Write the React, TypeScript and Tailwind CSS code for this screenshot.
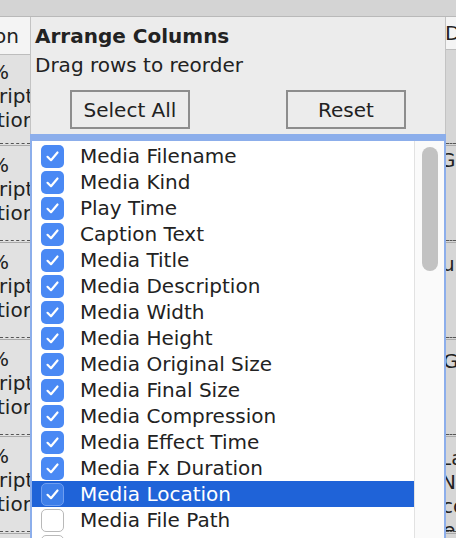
const font = "font-['DejaVu_Sans','Verdana',sans-serif]";

type Row = { label: string; checked: boolean };

const rows: Row[] = [
  { label: "Media Filename", checked: true },
  { label: "Media Kind", checked: true },
  { label: "Play Time", checked: true },
  { label: "Caption Text", checked: true },
  { label: "Media Title", checked: true },
  { label: "Media Description", checked: true },
  { label: "Media Width", checked: true },
  { label: "Media Height", checked: true },
  { label: "Media Original Size", checked: true },
  { label: "Media Final Size", checked: true },
  { label: "Media Compression", checked: true },
  { label: "Media Effect Time", checked: true },
  { label: "Media Fx Duration", checked: true },
  { label: "Media Location", checked: true },
  { label: "Media File Path", checked: false },
  { label: "Media Modified", checked: false },
];

const SELECTED = 13;

const Checkbox = ({ checked, selected }: { checked: boolean; selected: boolean }) => {
  if (!checked) {
    return <div className="w-[23px] h-[23px] shrink-0 rounded-[5px] bg-white border border-[#b9b9b9]" />;
  }
  return (
    <div
      className={`w-[23px] h-[23px] shrink-0 rounded-[5px] flex items-center justify-center ${
        selected ? "bg-[#3d7ee9] border border-[#6f9ef0]" : "bg-[#4a89f4]"
      }`}
    >
      <svg width="15" height="15" viewBox="0 0 15 15" fill="none">
        <path d="M2.5 7.8 L6 11.2 L12.5 3.5" stroke="white" strokeWidth="2.2" strokeLinecap="round" strokeLinejoin="round" />
      </svg>
    </div>
  );
};

// background table cell, partly hidden behind the popup
const Cell = ({ h, lines, dashed, pt, dark }: { h: number; lines: [string, number][]; dashed?: boolean; pt: number; dark?: boolean }) => (
  <div
    className={`shrink-0 overflow-hidden ${dark ? "bg-[#d6d6d6]" : "bg-[#e1e1e1]"} ${
      dashed ? "border-t border-dashed border-[#555]" : ""
    }`}
    style={{ height: h }}
  >
    {dashed && <div className="h-[2px] border-b border-[#a9a9a9]" />}
    <div style={{ paddingTop: pt }}>
      {lines.map(([t, ml], i) => (
        <div key={i} className="leading-[24px] whitespace-nowrap text-[#222]" style={{ marginLeft: ml }}>
          {t}
        </div>
      ))}
    </div>
  </div>
);

const leftLines: [string, number][] = [
  ["%", -10],
  ["ript", -1],
  ["tion", -3],
];

export default function App() {
  return (
    <div className={`w-[456px] h-[538px] overflow-hidden bg-[#d4d4d4] text-[20px] ${font}`}>
      <div className="h-[17px] bg-[#d4d4d4] border-b border-[#b9b9b9]" />
      <div className="flex h-[521px]">
        {/* left column of the table */}
        <div className="w-[30px] shrink-0 overflow-hidden flex flex-col">
          <div className="h-[38px] shrink-0 bg-[#f4f4f4] border-b border-[#bdbdbd] flex items-center">
            <span className="-ml-[6px] text-[#222] whitespace-nowrap">on</span>
          </div>
          <Cell h={88} pt={5} lines={leftLines} />
          <Cell h={97} pt={7} dashed lines={leftLines} />
          <Cell h={97} pt={7} dashed lines={leftLines} />
          <Cell h={97} pt={7} dashed lines={leftLines} />
          <Cell h={97} pt={7} dashed lines={leftLines} />
          <Cell h={97} pt={7} dashed lines={leftLines} />
        </div>

        {/* popup */}
        <div className="w-[416px] shrink-0 flex flex-col bg-[#ececec]">
          <div className="border-x border-[#c3c3c3] px-[4px] pt-[7px]">
            <div className="font-bold leading-[24px] text-[#222]">Arrange Columns</div>
            <div className="mt-[5px] leading-[24px] text-[#222]">Drag rows to reorder</div>
            <div className="mt-[13px] mb-[5px] flex justify-between px-[35px]">
              <button className="w-[120px] h-[39px] border-2 border-[#8d8d8d] bg-[#ececec] text-[#222] leading-none">
                Select All
              </button>
              <button className="w-[120px] h-[39px] border-2 border-[#8d8d8d] bg-[#ececec] text-[#222] leading-none">
                Reset
              </button>
            </div>
          </div>
          <div className="flex-1 flex border-t-[7px] border-x-2 border-[#8caeeb] bg-white overflow-hidden">
            <div className="w-[382px] shrink-0 pt-[2px]">
              {rows.map((r, i) => {
                const sel = i === SELECTED;
                return (
                  <div
                    key={r.label}
                    className={`h-[26px] flex items-center pl-[9px] gap-[16px] ${sel ? "bg-[#1f63d8]" : ""}`}
                  >
                    <Checkbox checked={r.checked} selected={sel} />
                    <span className={`whitespace-nowrap leading-none ${sel ? "text-white" : "text-[#222]"}`}>
                      {r.label}
                    </span>
                  </div>
                );
              })}
            </div>
            <div className="flex-1 bg-[#fafafa] border-l border-[#e2e2e2] pt-[6px] pl-[7px]">
              <div className="w-[16px] h-[124px] rounded-full bg-[#c2c2c2]" />
            </div>
          </div>
        </div>

        {/* right column of the table */}
        <div className="flex-1 overflow-hidden flex flex-col">
          <div className="h-[33px] shrink-0 bg-[#f4f4f4] border-b border-[#bdbdbd] flex items-center">
            <span className="ml-[-1px] text-[#222] whitespace-nowrap">De</span>
          </div>
          <Cell h={93} pt={5} dark lines={[]} />
          <Cell h={97} pt={2} dark dashed lines={[["Ga", -6]]} />
          <Cell h={97} pt={9} dark dashed lines={[["ur", -4]]} />
          <Cell h={97} pt={9} dark dashed lines={[["G.", -3]]} />
          <Cell h={97} pt={9} dark dashed lines={[["La", -6], ["Ne", -5], ["co", -4], ["e", -3]]} />
          <Cell h={97} pt={9} dark dashed lines={[]} />
        </div>
      </div>
    </div>
  );
}
